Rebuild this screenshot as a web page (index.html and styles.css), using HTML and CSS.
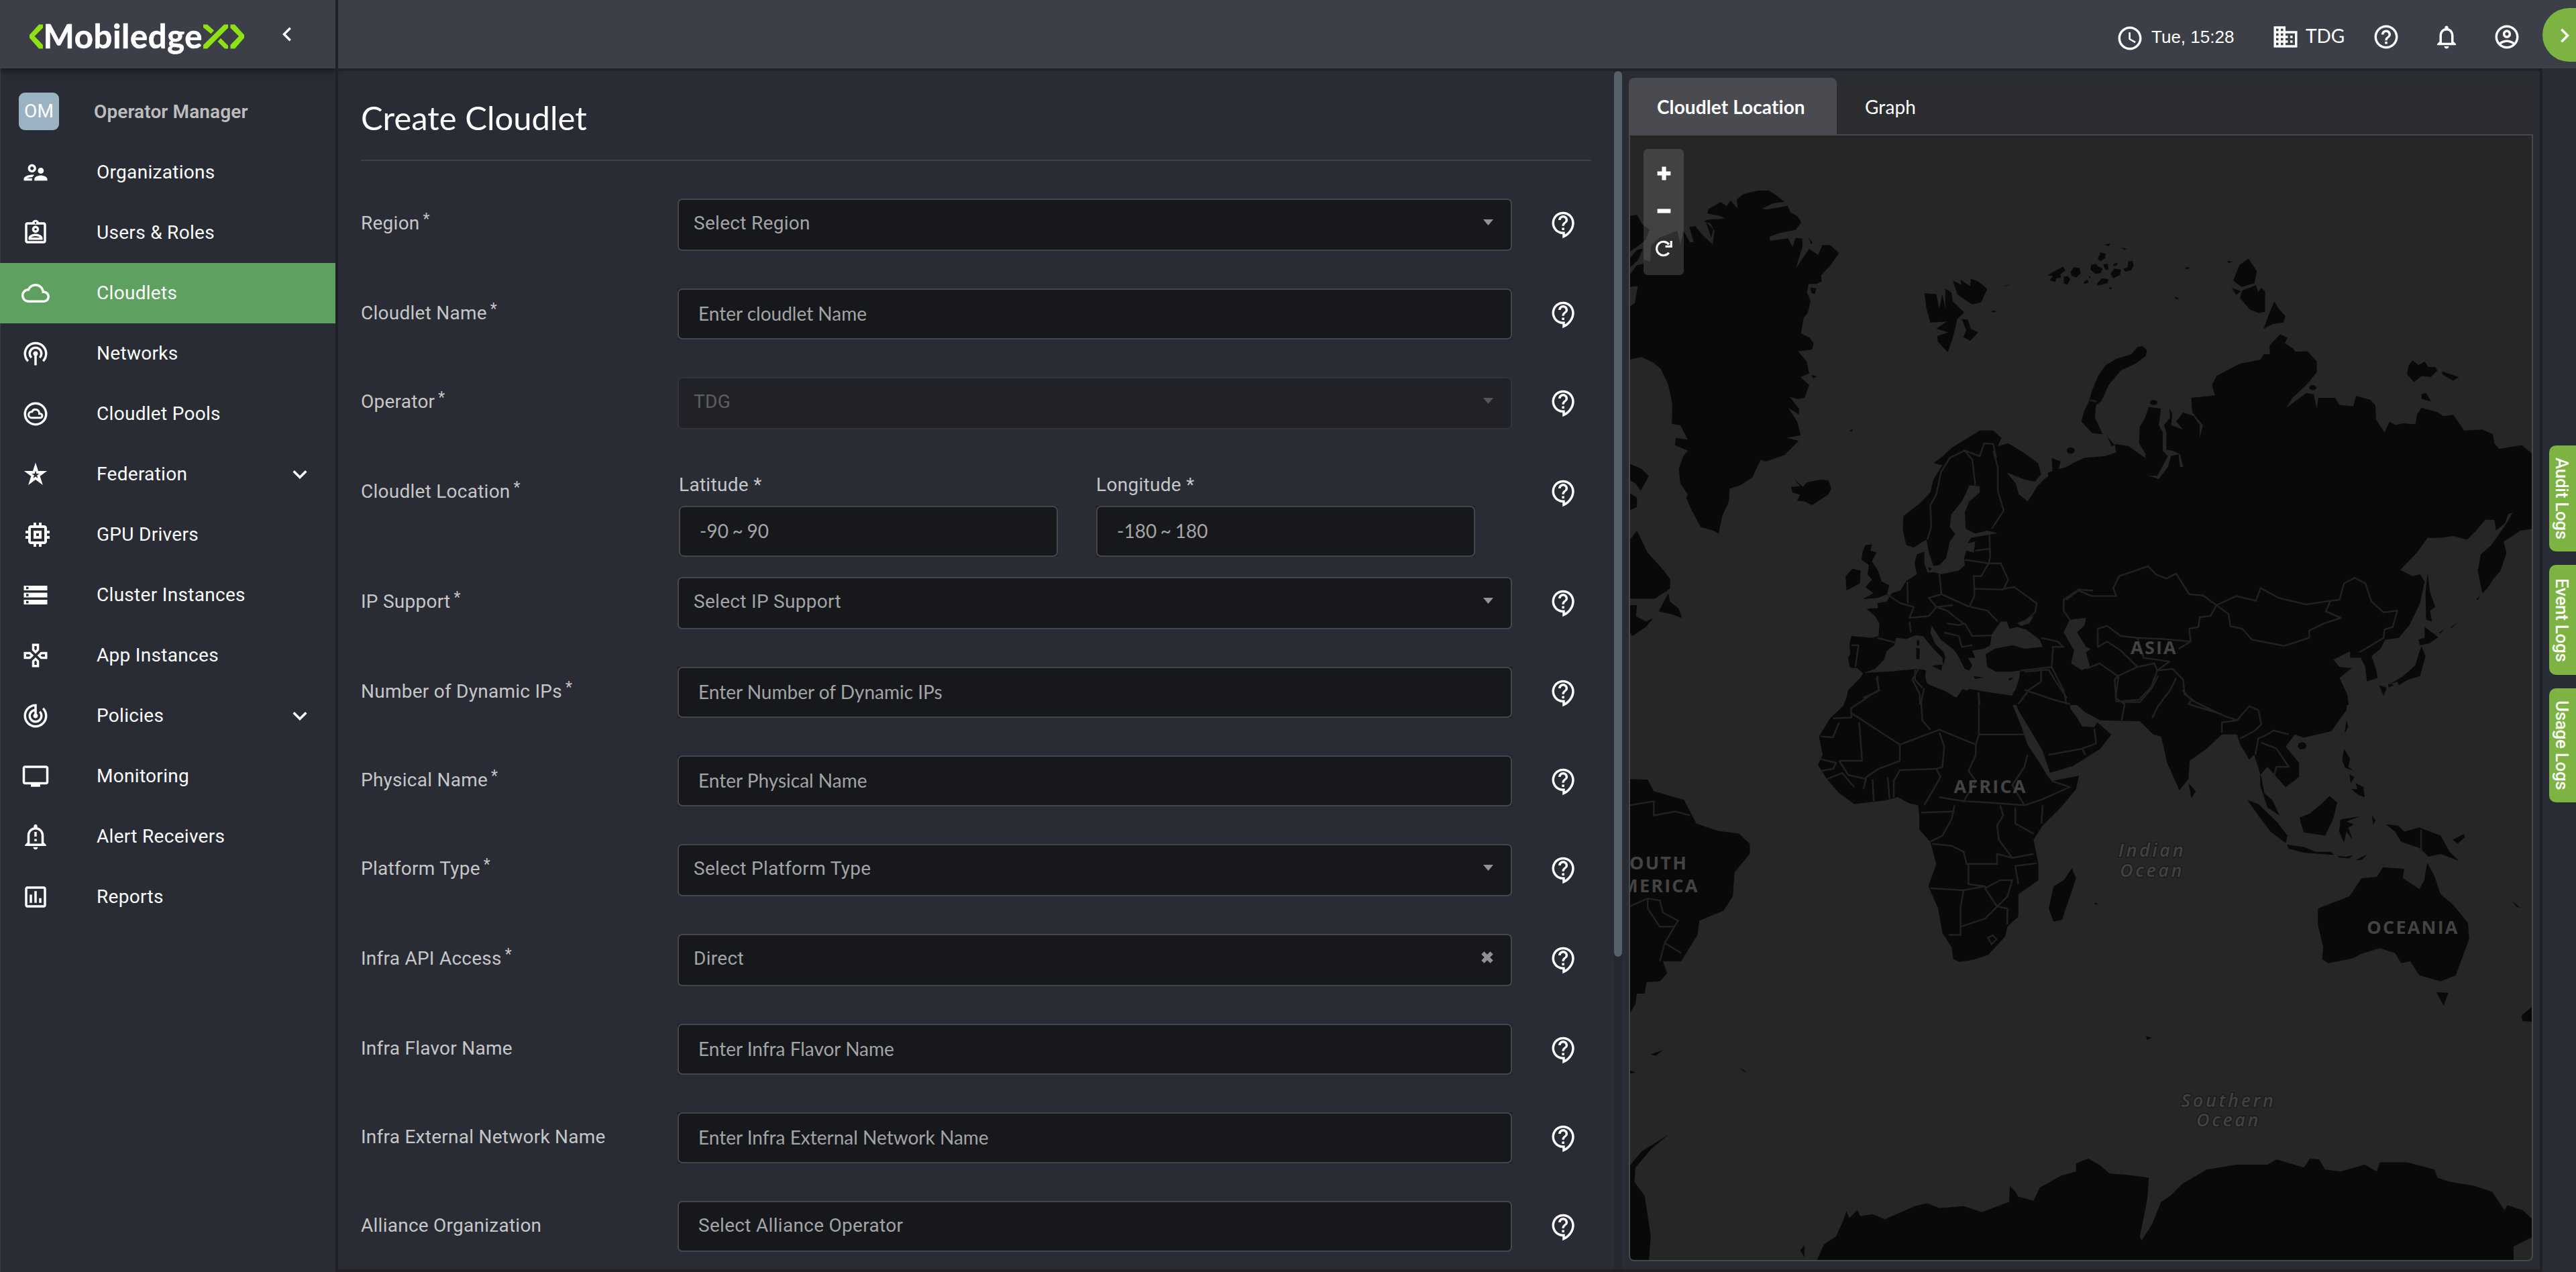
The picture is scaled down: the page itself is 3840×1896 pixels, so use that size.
FILE: index.html
```html
<!DOCTYPE html>
<html lang="en">
<head>
<meta charset="utf-8">
<title>MobiledgeX - Create Cloudlet</title>
<link rel="stylesheet" href="styles.css">
</head>
<body>
<svg class="defs" aria-hidden="true">
  <symbol id="i-help" viewBox="0 0 24 24"><path d="M11 23.59v-3.6c-5.01-.26-9-4.42-9-9.49C2 5.26 6.26 1 11.5 1S21 5.26 21 10.5c0 4.95-3.44 9.93-8.57 12.4l-1.43.69zM11.5 3C7.36 3 4 6.36 4 10.5S7.36 18 11.5 18H13v2.3c3.64-2.3 6-6.08 6-9.8C19 6.36 15.64 3 11.5 3zm-1 11.5h2v2h-2zm2-1.5h-2c0-3.25 3-3 3-5 0-1.1-.9-2-2-2s-2 .9-2 2h-2c0-2.21 1.79-4 4-4s4 1.79 4 4c0 2.5-3 2.75-3 5z"/></symbol>
  <symbol id="i-down" viewBox="0 0 24 24"><path d="M16.59 8.59L12 13.17 7.41 8.59 6 10l6 6 6-6z"/></symbol>
  <symbol id="i-left" viewBox="0 0 24 24"><path d="M15.41 7.41L14 6l-6 6 6 6 1.41-1.41L10.83 12z"/></symbol>
  <symbol id="i-right" viewBox="0 0 24 24"><path d="M8.59 16.59L13.17 12 8.59 7.41 10 6l6 6-6 6z"/></symbol>
  <symbol id="i-caret" viewBox="0 0 15 9"><path d="M0 0h15L7.500 9z"/></symbol>
</svg>

<aside class="sidebar">
  <div class="brand">
    <svg class="logo" viewBox="0 0 320 52" width="320" height="52">
      <g fill="#8fe014">
        <path d="M14 0.500H20V5.500L7.500 18 20 31V36.500H14L0 20.500V16z"/>
        <path d="M259 36.500V31L290 .5H296V5.500L265 36.500z"/>
        <path d="M259 .5H265L275 9.500 270.500 14.500 259 5z"/>
        <path d="M285 21L296 32V36.500H291L280.500 26z"/>
        <path d="M306 .5H299.500V5.500L312 18 299.500 31V36.500H306L320 20.500V16z"/>
      </g>
      <text x="20.500" y="36" textLength="237" class="logo-text">Mobiledge</text>
    </svg>
    <svg class="icon collapse"><use href="#i-left"/></svg>
  </div>
  <div class="role"><span class="avatar">OM</span><span>Operator Manager</span></div>
  <nav>
    <a class="item"><svg class="icon" viewBox="0 0 24 24"><path d="M9 12c1.930 0 3.500-1.570 3.500-3.500S10.930 5 9 5 5.500 6.570 5.500 8.500 7.070 12 9 12zm0-5c.83 0 1.500.67 1.500 1.500S9.830 10 9 10s-1.500-.67-1.500-1.500S8.170 7 9 7zm.05 10H4.770c.99-.5 2.700-1 4.230-1 .11 0 .23.01.34.01.34-.73.93-1.330 1.640-1.810-.73-.13-1.420-.2-1.980-.2-2.340 0-7 1.170-7 3.500V19h7v-1.500c0-.17.02-.34.05-.5zm7.450-2.500c-1.840 0-5.500 1.010-5.500 3V19h11v-1.500c0-1.990-3.660-3-5.500-3zm1.210-1.820c.76-.43 1.290-1.240 1.290-2.180C19 9.120 17.880 8 16.500 8S14 9.120 14 10.500c0 .94.53 1.750 1.290 2.180.36.2.77.32 1.210.32s.85-.12 1.210-.32z"/></svg>Organizations</a>
    <a class="item"><svg class="icon" viewBox="0 0 24 24"><path d="M19 3h-4.180C14.400 1.840 13.300 1 12 1s-2.400.84-2.820 2H5c-1.100 0-2 .9-2 2v14c0 1.100.9 2 2 2h14c1.100 0 2-.9 2-2V5c0-1.100-.9-2-2-2zm-7-.25c.41 0 .75.34.75.75s-.34.75-.75.75-.75-.34-.75-.75.34-.75.75-.75zM19 19H5V5h14v14zM12 6c-1.650 0-3 1.350-3 3s1.350 3 3 3 3-1.350 3-3-1.350-3-3-3zm0 4c-.55 0-1-.45-1-1s.45-1 1-1 1 .45 1 1-.45 1-1 1zm-6 6.470V18h12v-1.530c0-2.500-3.970-3.580-6-3.580s-6 1.070-6 3.580zM8.310 16c.69-.56 2.380-1.120 3.690-1.120s3.010.56 3.690 1.120H8.310z"/></svg>Users &amp; Roles</a>
    <a class="item active"><svg class="icon" viewBox="0 0 24 24"><path d="M19.350 10.040C18.670 6.590 15.640 4 12 4 9.110 4 6.600 5.640 5.350 8.040 2.340 8.360 0 10.910 0 14c0 3.310 2.690 6 6 6h13c2.760 0 5-2.240 5-5 0-2.640-2.050-4.780-4.650-4.960zM19 18H6c-2.210 0-4-1.790-4-4s1.790-4 4-4h.71C7.370 7.690 9.480 6 12 6c3.040 0 5.500 2.460 5.500 5.500v.5H19c1.660 0 3 1.340 3 3s-1.340 3-3 3z"/></svg>Cloudlets</a>
    <a class="item"><svg class="icon" viewBox="0 0 24 24"><g fill="none" stroke="#fff" stroke-width="2"><path d="M5.600 18.400a9 9 0 1 1 12.800 0M8.500 15.500a5 5 0 1 1 7 0M12 12v10"/></g><circle cx="12" cy="12" r="2"/></svg>Networks</a>
    <a class="item"><svg class="icon" viewBox="0 0 24 24"><circle cx="12" cy="12" r="9" fill="none" stroke="#fff" stroke-width="2"/><path transform="translate(5.100 4.800) scale(.575 .6)" fill="none" stroke="#fff" stroke-width="3" d="M19 17.500H6a4.300 4.300 0 0 1 0-8.600h.7A5.700 5.700 0 0 1 17.500 11v.8H19a2.800 2.800 0 0 1 0 5.700z"/></svg>Cloudlet Pools</a>
    <a class="item"><svg class="icon" viewBox="0 0 24 24"><path fill-rule="evenodd" d="M12 2l2.300 7.100H21.800l-6 4.500 2.400 7.600L12 16.600l-6.200 4.600 2.400-7.600-6-4.500h7.500zM12 8.900l-.8 2.500H8.700l2.100 1.500-.8 2.500 2-1.500 2 1.500-.8-2.500 2.100-1.500h-2.500z"/></svg>Federation<svg class="icon more"><use href="#i-down"/></svg></a>
    <a class="item"><svg class="icon chip" viewBox="0 0 24 24"><path d="M15 9H9v6h6V9zm-2 4h-2v-2h2v2zm8-2V9h-2V7c0-1.100-.9-2-2-2h-2V3h-2v2h-2V3H9v2H7c-1.100 0-2 .9-2 2v2H3v2h2v2H3v2h2v2c0 1.100.9 2 2 2h2v2h2v-2h2v2h2v-2h2c1.100 0 2-.9 2-2v-2h2v-2h-2v-2h2zm-4 6H7V7h10v10z"/></svg>GPU Drivers</a>
    <a class="item"><svg class="icon" viewBox="0 0 24 24"><path d="M2 20h20v-4H2v4zm2-3h2v2H4v-2zM2 4v4h20V4H2zm4 3H4V5h2v2zm-4 7h20v-4H2v4zm2-3h2v2H4v-2z"/></svg>Cluster Instances</a>
    <a class="item"><svg class="icon" viewBox="0 0 24 24"><path d="M13 4v2.670l-1 1-1-1V4h2m7 7v2h-2.670l-1-1 1-1H20M6.670 11l1 1-1 1H4v-2h2.670M12 16.330l1 1V20h-2v-2.670l1-1M15 2H9v5.500l3 3 3-3V2zm7 7h-5.500l-3 3 3 3H22V9zM7.500 9H2v6h5.500l3-3-3-3zm4.500 4.500l-3 3V22h6v-5.500l-3-3z"/></svg>App Instances</a>
    <a class="item"><svg class="icon" viewBox="0 0 24 24"><path d="M19.070 4.930l-1.410 1.410C19.100 7.790 20 9.790 20 12c0 4.420-3.580 8-8 8s-8-3.580-8-8c0-4.080 3.050-7.440 7-7.930v2.020C8.160 6.570 6 9.030 6 12c0 3.310 2.690 6 6 6s6-2.690 6-6c0-1.660-.67-3.160-1.760-4.240l-1.410 1.410C15.550 9.900 16 10.900 16 12c0 2.210-1.790 4-4 4s-4-1.790-4-4c0-1.860 1.280-3.410 3-3.860v2.140c-.6.35-1 .98-1 1.720 0 1.100.9 2 2 2s2-.9 2-2c0-.74-.4-1.380-1-1.720V2h-1C6.480 2 2 6.480 2 12s4.480 10 10 10 10-4.480 10-10c0-2.760-1.120-5.260-2.930-7.070z"/></svg>Policies<svg class="icon more"><use href="#i-down"/></svg></a>
    <a class="item"><svg class="icon" viewBox="0 0 24 24"><path d="M21 3H3c-1.100 0-2 .9-2 2v12c0 1.100.9 2 2 2h5v2h8v-2h5c1.100 0 2-.9 2-2V5c0-1.100-.9-2-2-2zm0 14H3V5h18v12z"/></svg>Monitoring</a>
    <a class="item"><svg class="icon" viewBox="0 0 24 24"><path d="M12 23c1.100 0 1.990-.89 1.990-1.990h-3.980c0 1.100.89 1.990 1.990 1.990zm7-6v-6c0-3.350-2.360-6.150-5.500-6.830V3c0-.83-.67-1.500-1.500-1.500s-1.500.67-1.500 1.500v1.170C7.360 4.850 5 7.650 5 11v6l-2 2v1h18v-1l-2-2zm-2 1H7v-7c0-2.760 2.240-5 5-5s5 2.240 5 5v7zM11 8h2v4h-2zm0 6h2v2h-2z"/></svg>Alert Receivers</a>
    <a class="item"><svg class="icon" viewBox="0 0 24 24"><path d="M19 3H5c-1.100 0-2 .9-2 2v14c0 1.100.9 2 2 2h14c1.100 0 2-.9 2-2V5c0-1.100-.9-2-2-2zm0 16H5V5h14v14zM7 10h2v7H7zm4-3h2v10h-2zm4 6h2v4h-2z"/></svg>Reports</a>
  </nav>
</aside>

<div class="page">
  <header class="topbar">
    <div class="clock"><svg class="icon" viewBox="0 0 24 24"><path d="M11.990 2C6.470 2 2 6.480 2 12s4.470 10 9.990 10C17.520 22 22 17.520 22 12S17.520 2 11.990 2zM12 20c-4.420 0-8-3.580-8-8s3.580-8 8-8 8 3.580 8 8-3.580 8-8 8zm.5-13H11v6l5.250 3.150.75-1.230-4.500-2.670z"/></svg><span>Tue, 15:28</span></div>
    <div class="org"><svg class="icon" viewBox="0 0 24 24"><path d="M12 7V3H2v18h20V7H12zM6 19H4v-2h2v2zm0-4H4v-2h2v2zm0-4H4V9h2v2zm0-4H4V5h2v2zm4 12H8v-2h2v2zm0-4H8v-2h2v2zm0-4H8V9h2v2zm0-4H8V5h2v2zm10 12h-8v-2h2v-2h-2v-2h2v-2h-2V9h8v10zm-2-8h-2v2h2v-2zm0 4h-2v2h2v-2z"/></svg><span>TDG</span></div>
    <svg class="icon act" viewBox="0 0 24 24"><path d="M11 18h2v-2h-2v2zm1-16C6.480 2 2 6.480 2 12s4.480 10 10 10 10-4.480 10-10S17.520 2 12 2zm0 18c-4.410 0-8-3.590-8-8s3.590-8 8-8 8 3.590 8 8-3.590 8-8 8zm0-14c-2.210 0-4 1.790-4 4h2c0-1.100.9-2 2-2s2 .9 2 2c0 2-3 1.750-3 5h2c0-2.250 3-2.500 3-5 0-2.210-1.790-4-4-4z"/></svg>
    <svg class="icon act" viewBox="0 0 24 24"><path d="M12 22c1.100 0 2-.9 2-2h-4c0 1.100.9 2 2 2zm6-6v-5c0-3.070-1.630-5.640-4.500-6.320V4c0-.83-.67-1.500-1.500-1.500s-1.500.67-1.500 1.500v.68C7.640 5.360 6 7.920 6 11v5l-2 2v1h16v-1l-2-2zm-2 1H8v-6c0-2.480 1.510-4.500 4-4.500s4 2.020 4 4.500v6z"/></svg>
    <svg class="icon" viewBox="0 0 24 24"><path d="M12 2C6.480 2 2 6.480 2 12s4.480 10 10 10 10-4.480 10-10S17.520 2 12 2zM7.070 18.280c.43-.9 3.050-1.780 4.930-1.780s4.510.88 4.930 1.780C15.570 19.360 13.860 20 12 20s-3.570-.64-4.930-1.720zm11.290-1.450c-1.430-1.740-4.900-2.330-6.360-2.330s-4.930.59-6.360 2.330C4.620 15.490 4 13.820 4 12c0-4.410 3.590-8 8-8s8 3.590 8 8c0 1.820-.62 3.490-1.640 4.830zM12 6c-1.940 0-3.500 1.560-3.500 3.500S10.060 13 12 13s3.500-1.560 3.500-3.500S13.940 6 12 6zm0 5c-.83 0-1.500-.67-1.500-1.500S11.170 8 12 8s1.500.67 1.500 1.500S12.830 11 12 11z"/></svg>
  </header>

  <main class="content">
    <section class="form">
      <h1>Create Cloudlet</h1>
      <div class="row"><label>Region<sup>*</sup></label><div class="field select">Select Region<svg class="caret"><use href="#i-caret"/></svg></div><svg class="icon"><use href="#i-help"/></svg></div>
      <div class="row"><label>Cloudlet Name<sup>*</sup></label><div class="wrap"><div class="field input">Enter cloudlet Name</div></div><svg class="icon"><use href="#i-help"/></svg></div>
      <div class="row"><label>Operator<sup>*</sup></label><div class="field select disabled">TDG<svg class="caret"><use href="#i-caret"/></svg></div><svg class="icon"><use href="#i-help"/></svg></div>
      <div class="row location"><label>Cloudlet Location<sup>*</sup></label>
        <div class="coords">
          <div><span>Latitude *</span><div class="wrap"><div class="field input">-90 ~ 90</div></div></div>
          <div><span>Longitude *</span><div class="wrap"><div class="field input">-180 ~ 180</div></div></div>
        </div><svg class="icon"><use href="#i-help"/></svg></div>
      <div class="row"><label>IP Support<sup>*</sup></label><div class="field select">Select IP Support<svg class="caret"><use href="#i-caret"/></svg></div><svg class="icon"><use href="#i-help"/></svg></div>
      <div class="row"><label>Number of Dynamic IPs<sup>*</sup></label><div class="wrap"><div class="field input">Enter Number of Dynamic IPs</div></div><svg class="icon"><use href="#i-help"/></svg></div>
      <div class="row"><label>Physical Name<sup>*</sup></label><div class="wrap"><div class="field input">Enter Physical Name</div></div><svg class="icon"><use href="#i-help"/></svg></div>
      <div class="row"><label>Platform Type<sup>*</sup></label><div class="field select">Select Platform Type<svg class="caret"><use href="#i-caret"/></svg></div><svg class="icon"><use href="#i-help"/></svg></div>
      <div class="row"><label>Infra API Access<sup>*</sup></label><div class="field select">Direct<svg class="clear" viewBox="0 0 18 18"><path d="M4.500 4.500l9 9M13.500 4.500l-9 9" stroke="#8f9194" stroke-width="6" stroke-linecap="square"/></svg></div><svg class="icon"><use href="#i-help"/></svg></div>
      <div class="row"><label>Infra Flavor Name</label><div class="wrap"><div class="field input">Enter Infra Flavor Name</div></div><svg class="icon"><use href="#i-help"/></svg></div>
      <div class="row"><label>Infra External Network Name</label><div class="wrap"><div class="field input">Enter Infra External Network Name</div></div><svg class="icon"><use href="#i-help"/></svg></div>
      <div class="row"><label>Alliance Organization</label><div class="field input plain">Select Alliance Operator</div><svg class="icon"><use href="#i-help"/></svg></div>
    </section>
    <div class="scroll"><div class="thumb"></div></div>
    <section class="side">
      <div class="tabs"><span class="tab on">Cloudlet Location</span><span class="tab">Graph</span></div>
      <div class="map">
        <svg class="world" viewBox="0 0 1344 1676" width="1344" height="1676">
          <!-- southern lands, Africa and southern Asia -->
          <g class="land" transform="translate(-10 748) scale(.9057 .6033)">
            <path d="M395 88L430 85 495 80 497 100 500 115 530 133 548 150 558 128 585 138 632 145 640 165 655 220 665 265 685 310 697 340 705 355 750 342 745 375 720 420 690 465 675 500 683 560 683 600 650 635 650 690 632 715 628 740 600 785 575 797 553 802 543 795 540 765 525 730 518 670 502 615 515 560 505 505 487 475 487 440 485 415 470 410 452 395 430 403 380 412 355 385 335 350 320 315 328 290 322 245 340 200 365 165 370 130 390 100z"/>
            <path d="M738 570L745 595 735 640 722 698 708 702 700 670 708 615 725 600z"/>
            <path d="M652 100L645 130 640 140 650 180 668 225 690 280 702 335 740 318 785 275 803 240 780 210 775 222 755 220 745 195 735 175 735 152 760 185 785 205 850 207 872 240 885 245 895 310 915 378 930 350 932 305 960 275 985 240 1010 240 1015 265 1030 302 1038 290 1050 345 1055 385 1068 402 1080 440 1060 420 1048 365 1048 340 1060 320 1075 345 1090 370 1112 345 1112 310 1090 270 1105 240 1120 248 1165 232 1190 180 1192 145 1175 100z"/>
            <path d="M930 360L942 380 935 397zM1027 402L1045 412 1075 455 1093 490 1090 508 1065 480 1045 440zM1092 512L1120 518 1140 530 1165 530 1170 538 1120 532 1095 522zM1175 540l14 2 12-4-6 8-16-2zM1205 550l20-14-10 14zM1113 445L1130 435 1150 410 1162 392 1175 408 1168 450 1155 490 1120 482 1115 460zM1180 450L1212 442 1190 455 1202 462 1193 470 1200 500 1190 480 1186 507 1178 480zM1186 275L1196 300 1193 320 1202 330 1188 322 1183 305zM1205 360L1218 370 1220 395 1210 390 1198 375 1208 375zM1195 338l8 8-6 14zM1190 205L1193 220 1187 238zM1255 462L1275 465 1285 480 1310 470 1345 490 1360 530 1375 552 1345 535 1325 542 1310 520 1280 505 1270 480zM1232 440l6 12-4 12zM1365 500l18-14 2 8-12 16zM1462 650l14 18-6-2z"/>
            <ellipse cx="1117" cy="268" rx="7" ry="9"/>
            <path d="M1143 670L1195 640 1215 595 1240 592 1250 568 1285 572 1283 595 1310 622 1318 600 1323 557 1335 590 1345 635 1365 660 1390 705 1392 745 1370 835 1345 850 1310 835 1295 800 1280 805 1270 780 1245 768 1215 782 1200 793 1160 805 1150 795 1152 765 1143 710zM1338 877L1358 878 1350 910zM1496 912L1478 935 1480 948 1496 950z"/>
            <path d="M8 350L40 352 50 380 100 402 113 440 120 460 155 478 190 485 208 510 208 535 183 580 180 640 165 675 125 700 122 735 95 800 65 800 72 830 60 850 38 852 35 880 22 880 20 905 8 935z"/>
            <path d="M8 1310L30 1270 75 1228 45 1265 20 1310 18 1345 35 1380 45 1480 42 1540 8 1540z"/>
            <path d="M318 1540L330 1500 350 1480 362 1440 367 1418 372 1435 385 1415 390 1430 410 1425 430 1438 480 1405 500 1398 520 1410 560 1405 590 1420 635 1395 636 1355 645 1370 650 1382 675 1392 685 1360 720 1330 745 1320 745 1300 765 1288 785 1305 800 1325 830 1328 865 1335 862 1390 850 1480 853 1490 870 1450 885 1395 900 1380 920 1350 960 1315 1010 1303 1060 1303 1075 1290 1120 1310 1130 1288 1145 1290 1155 1315 1180 1320 1220 1303 1240 1320 1245 1297 1290 1297 1335 1315 1340 1335 1360 1345 1400 1355 1430 1370 1450 1415 1455 1403 1480 1415 1498 1440 1498 1480 1465 1505 1465 1540zM291 1515l7-14 0 30zM45 1030l20-10-12 14zM190 1060l14 16-6-4zM860 985l10 5-8 4zM775 655l6 3-4 3zM10 1070l10 5-10 3z"/>
          </g>
          <!-- northern Eurasia and Pacific coast -->
          <g class="land" transform="translate(650 -2) scale(.4528 .5421)">
            <path d="M-60 930L0 915 60 890 130 885 165 875 160 852 205 858 260 890 262 880 240 850 242 805 260 780 272 750 312 755 305 800 318 820 318 870 335 885 300 940 268 938 305 948 335 915 345 885 370 880 375 915 385 915 375 880 350 870 330 868 330 820 322 800 342 780 340 755 350 770 345 800 385 812 362 790 385 765 420 775 440 800 440 835 450 800 415 765 412 725 490 718 480 690 495 665 570 632 640 620 650 605 670 605 670 580 705 550 728 560 720 575 745 588 755 598 795 597 825 625 825 655 790 690 745 725 725 752 790 712 815 715 825 755 830 725 885 725 900 745 945 748 955 720 1000 730 1018 745 1020 785 1048 820 1065 790 1085 800 1110 795 1150 798 1155 770 1170 752 1225 765 1240 775 1275 772 1310 815 1370 812 1405 825 1410 850 1425 865 1500 855 1536 880 1536 1085 1495 1090 1460 1110 1440 1120 1450 1150 1430 1200 1405 1225 1385 1250 1370 1262 1355 1200 1365 1155 1400 1130 1450 1070 1470 1040 1455 1045 1445 1070 1415 1090 1410 1060 1380 1060 1350 1090 1320 1115 1275 1105 1230 1110 1190 1110 1155 1150 1100 1198 1140 1215 1165 1210 1180 1230 1165 1290 1130 1350 1095 1385 1050 1390 1035 1415 1005 1435 1020 1470 1025 1495 990 1505 985 1465 970 1440 935 1440 935 1422 880 1445 900 1465 940 1468 900 1495 925 1540 930 1570 0 1570z"/>
            <path d="M1190 1208L1198 1260 1215 1300 1198 1310 1204 1340 1185 1335 1183 1260zM1180 1355L1225 1383 1195 1400 1165 1405 1160 1390 1180 1385zM1170 1408L1183 1435 1165 1490 1125 1500 1095 1515 1090 1505 1060 1515 1110 1490 1150 1460 1158 1435zM1030 1515L1055 1522 1045 1545zM1060 1512l20 2-18 8zM1225 1372l22-12-14 12zM1262 1358l28-16-22 16zM1350 1280l14-14-8 14z"/>
            <path d="M120 825L85 822 50 790 60 760 75 735 85 705 105 665 130 635 165 618 215 605 235 585 252 583 266 594 262 610 230 630 180 650 140 690 115 735 98 745 95 780zM135 832L160 855 150 858z"/>
            <path d="M600 342L628 377 620 410 578 420 550 403 570 360zM545 422L575 432 560 442zM580 430L625 415 632 435 642 422 655 432 655 488 635 492 605 482 572 450zM685 460L700 480 722 500 715 518 680 522 650 535 670 490z"/>
            <path d="M1140 622L1160 635 1180 625 1192 640 1215 640 1222 650 1200 668 1170 665 1145 682 1122 660 1128 635zM1237 652L1293 668 1275 678 1240 662zM1170 715L1185 712 1202 735 1170 728zM530 348l18 3-14 3zM355 447l18 5-10 2zM392 366l18 0-14 6z"/>
            <ellipse cx="15" cy="870" rx="13" ry="9"/><ellipse cx="288" cy="738" rx="12" ry="7"/><ellipse cx="812" cy="697" rx="12" ry="7"/>
            <path d="M14 378l12-12 18 2 4 14-14 12-16-4zM82 360l14-4 10 8 14 6-6 12-18 2-16-12zM104 345l8-20 18 4-2 12-14 8zM122 358l14-2 4 16-12 0zM146 384l12-14 22 2-2 14-22 10zM156 356l14-2-4 8-10 0zM188 370l14-4 2-16 14-2 4 12-8 14-20 4zM102 410l16-14 22 4-4 10-32 6zM-8 392l12-2 10 8-10 16-12-4zM-62 388l34-16 18-8 8 10-18 12 4 8-16 2-4 10-18-4 10-12zM58 406l12-6 4 8-14 4zM180 312l18 2-4 4zM128 304l18-4-6 8zM140 424l8-4 2 6-8 0zM74 390l8 2-6 4z"/>
          </g>
          <!-- Greenland, Iceland and Europe -->
          <g class="land" transform="translate(-10 -2) scale(.4464 .5421)">
            <path d="M18 225L45 222 65 250 88 262 75 290 45 310 18 325zM18 345L45 318 65 315 50 345 18 370zM18 390L45 360 65 357 70 345 90 350 92 305 120 285 180 265 190 305 200 265 222 297 235 297 220 255 240 253 265 278 298 303 304 265 290 245 268 240 280 235 340 232 320 224 280 218 285 205 325 187 345 198 358 182 382 205 378 180 400 165 450 155 485 155 510 168 538 186 500 190 462 205 480 207 548 197 558 215 580 225 594 242 575 263 520 272 488 282 490 293 550 287 565 310 575 285 597 287 598 310 575 370 620 315 650 332 665 305 690 305 720 327 690 362 660 388 662 405 645 412 618 412 613 435 625 460 615 492 602 505 593 548 622 560 635 575 630 592 583 597 612 625 620 658 592 668 620 690 605 725 580 728 555 722 587 755 585 770 550 752 580 790 592 828 545 835 585 843 538 882 475 900 458 895 430 945 390 965 355 975 352 1010 330 1050 318 1098 300 1090 258 1080 225 1030 210 1000 215 990 190 960 185 920 200 885 215 870 172 855 175 835 215 840 190 800 162 797 163 740 150 690 125 645 100 628 60 613 18 620z"/>
            <path class="sea" d="M18 420L48 418 38 465 18 475zM275 240L300 262 295 295 270 260z"/>
            <path d="M275 240L300 262 293 285z"/>
            <path d="M560 970L590 968 570 948 600 970 612 958 625 955 660 950 685 952 694 975 685 990 630 1020 605 1010 580 1008 590 992 565 985zM18 905L60 920 85 940 58 980 40 960 18 950zM18 985L45 1000 45 1025 18 1035zM18 1120L45 1090 80 1150 135 1200 157 1225 155 1250 105 1277 18 1277zM118 1312L150 1262 155 1285 185 1305 195 1330 160 1320zM18 1295L45 1295 42 1325 75 1340 100 1330 75 1355 30 1380 18 1365z"/>
            <path d="M1005 437L1045 440 1055 480 1065 440 1075 480 1075 425 1095 435 1100 460 1138 490 1115 508 1100 560 1083 600 1050 570 1048 555 1085 545 1045 535 1080 515 1025 518 1012 480zM1100 402L1130 415 1125 400 1158 418 1160 398 1185 405 1215 425 1195 462 1165 468 1140 455 1115 440zM1130 508L1150 510 1160 535 1185 545 1158 568 1135 558 1145 540zM1270 418l26-8-20 8zM1225 488l14-4 6 6zM755 816l12-6-4 8zM625 422l20 2-6 16-12-4zM628 662l18 4-12 6zM618 283l14 16-6 4z"/>
            <path d="M1568 895L1540 890 1500 905 1470 938 1435 950 1430 890 1460 900 1450 930 1410 945 1380 970 1370 985 1350 1010 1320 990 1310 960 1280 930 1340 950 1375 955 1395 935 1385 905 1330 872 1285 850 1250 858 1262 835 1235 815 1190 815 1150 835 1100 860 1060 890 1035 905 1065 910 1035 950 1025 985 990 1015 935 1050 933 1090 945 1130 970 1137 1000 1120 1012 1115 1020 1150 1035 1187 1055 1185 1078 1165 1090 1120 1108 1100 1090 1080 1095 1045 1130 1010 1145 985 1155 965 1190 968 1190 985 1155 1010 1140 1040 1143 1085 1175 1098 1215 1090 1250 1097 1160 1110 1150 1125 1175 1120 1170 1150 1145 1145 1138 1165 1140 1185 1120 1200 1060 1210 1040 1205 1015 1205 1005 1180 1005 1148 980 1155 972 1180 980 1210 945 1228 925 1255 895 1262 880 1285 848 1290 850 1303 812 1305 840 1325 855 1345 852 1380 830 1385 762 1380 755 1400 757 1430 750 1440 757 1467 780 1468 800 1482 840 1470 870 1445 880 1420 905 1405 910 1385 945 1388 975 1378 1000 1380 1035 1415 1065 1440 1068 1460 1075 1440 1070 1425 1040 1400 1025 1370 1030 1352 1060 1390 1100 1415 1115 1430 1140 1470 1155 1475 1165 1460 1150 1440 1175 1440 1165 1420 1205 1415 1225 1405 1230 1375 1260 1340 1280 1340 1290 1360 1315 1355 1345 1362 1390 1390 1400 1410 1340 1415 1300 1405 1240 1415 1210 1430 1215 1465 1245 1478 1290 1478 1325 1475 1320 1510 1310 1545 1265 1540 1220 1535 1155 1525 1120 1550 1095 1545 1040 1525 1005 1505 1010 1475 985 1470 920 1475 870 1485 835 1492 800 1485 780 1510 750 1540 735 1570 1570 1570z"/>
            <path d="M808 1130L830 1128 825 1145 845 1150 830 1175 850 1200 862 1230 888 1240 880 1265 850 1275 800 1278 835 1262 808 1245 830 1225 815 1210 820 1185 795 1170 800 1145zM742 1215L765 1195 792 1200 790 1235 745 1255zM1030 1462L1065 1458 1062 1475zM978 1412L990 1415 988 1445 978 1442zM980 1392l8 0 0 14-8 0zM1170 1490l34 4-30 4zM1285 1497l18-4-12 10zM1018 1190l12 4-8 8z"/>
            <path class="sea" d="M1315 1345L1370 1325 1355 1345 1330 1352zM1490 1335L1545 1330 1540 1350 1515 1370 1545 1410 1560 1415 1545 1425 1558 1465 1530 1474 1495 1455 1505 1420 1470 1370z"/>
          </g>
          <g class="borders" transform="translate(-10 748) scale(.9057 .6033)">
            <path d="M418 95L420 130 375 175 375 198 345 200M373 185L455 265 520 228 580 265M325 245L345 247 355 210M388 210L393 305 355 305M495 125L490 160 492 205 505 228M480 80L480 105 492 125M585 138V240H660M585 240L580 265 580 290 568 330 580 355 560 405M455 265L455 305 420 325 400 345 395 375M520 235L528 270 525 320 515 325 455 328 445 355 445 395M515 325L522 345 495 415M520 395L560 405 600 408 660 415 690 400 735 370 705 355M665 290L660 320 640 365 660 415M545 415L540 450 525 490 505 505M490 433L545 430M620 415L625 440 615 465 618 500 640 545 675 535M645 420L645 460 675 485M690 415L688 460M508 510L540 515 560 530 565 560 615 560 615 535 640 545M568 560L568 610 595 615 560 625 505 620M560 625L555 665 555 735 535 735M555 715L595 695 632 640 640 600 620 600 595 620 615 665 632 670 632 710M680 558L645 565 650 610M600 742l8-6 6 10-8 12zM322 300L350 310 345 325 325 330M335 350L360 335 380 370M410 350L412 405M435 345L438 400M355 305L370 340 400 350"/>
            <path d="M660 85L700 80 712 110 730 150M660 130L710 155 735 165M700 290L755 275 778 262 775 225M755 275L760 290M650 165L665 135M815 95L810 150 825 165 820 205M820 160L850 160 870 125 880 95M870 200L880 170 900 130 910 100M920 130L935 155 990 195 1010 205 985 210 985 235M935 155L930 165 985 190M1010 205L1030 170 1045 180 1050 215 1040 230 1015 250M1040 290L1045 250 1060 240 1070 230 1095 240M1050 260L1075 275 1095 320 1075 320 1070 345M10 415L50 405 50 440 85 430 110 440M10 665L40 645 60 650 65 680 90 700 68 755 95 780M40 645L40 670 60 715 85 715M68 755L60 800M1313 475V530"/>
          </g>
          <g class="borders" transform="translate(650 -2) scale(.4528 .5421)">
            <path d="M0 1280L40 1255 85 1270 165 1270 155 1248 175 1215 270 1188 295 1210 330 1222 362 1208 405 1265 450 1268 495 1295 475 1325 440 1328 435 1355 405 1360 410 1395 370 1415M410 1395L320 1388 235 1385 180 1380 135 1352 104 1360V1410L135 1395 180 1420 235 1465 290 1455 300 1475 280 1520 240 1555 165 1560 160 1500 170 1490 235 1465M235 1385L255 1440 340 1450 300 1475M495 1295L560 1270 625 1283 640 1248 700 1275 790 1293 870 1283 855 1312 905 1330 850 1345 800 1365 800 1385 718 1407 612 1390 580 1360 540 1352 535 1320zM870 1283L900 1280 915 1235 950 1220 985 1235 1005 1285 1045 1315 1090 1310 1075 1355 1048 1362 1045 1385 965 1425M65 1470L110 1455 170 1490M300 1475L350 1470 385 1500 390 1540 420 1558M100 735l-22-4"/>
          </g>
          <g class="borders" transform="translate(-10 -2) scale(.4464 .5421)">
            <path d="M1015 1115L1028 1080 1025 1020 1045 990 1060 930 1090 890 1140 870 1165 895 1175 965M1140 870L1190 885 1205 850 1235 852 1245 890M1235 870L1250 915 1250 980 1270 1035 1230 1085M1222 1100L1225 1160 1220 1180 1260 1180 1285 1225 1270 1250 1305 1245 1380 1290 1375 1315 1340 1340M1175 1145L1222 1140M1140 1170L1220 1180 1195 1215 1170 1215 1172 1250 1270 1252M1172 1250L1172 1270 1155 1300M1055 1210L1062 1265 1130 1290 1155 1300M1062 1265L1020 1275 1045 1300 1100 1295M970 1300L955 1330 1020 1325 1045 1300 1080 1310 1135 1345M1160 1300L1215 1310 1250 1340M880 1265L925 1290 970 1300M948 1230L950 1290M955 1340L960 1370M848 1385L908 1398M762 1405L785 1405 775 1465M1140 1345L1165 1380 1230 1378M1080 1345L1120 1350 1140 1345M1070 1370L1120 1380 1130 1410 1165 1405M1395 1385L1450 1395 1470 1410 1430 1410M1325 1475L1430 1465 1470 1530 1480 1568M1430 1465L1435 1410M1395 1470L1395 1505 1350 1530M1185 1535L1190 1568M985 1470L965 1500 990 1540V1568M845 1495L855 1530 800 1550M1568 1255L1520 1252 1470 1280 1470 1310 1490 1335"/>
          </g>
          <g class="names">
            <text x="781" y="773">ASIA</text>
            <text x="537" y="980">AFRICA</text>
            <text x="1167" y="1190">OCEANIA</text>
            <text x="34" y="1094">SOUTH</text>
            <text x="34" y="1128">AMERICA</text>
            <text class="ocean" x="778" y="1075">Indian</text>
            <text class="ocean" x="778" y="1105">Ocean</text>
            <text class="ocean" x="892" y="1448">Southern</text>
            <text class="ocean" x="892" y="1477">Ocean</text>
          </g>
        </svg>
        <div class="zoom">
          <svg viewBox="0 0 24 24"><path d="M12 2.500v19M2.500 12h19" stroke-width="6"/></svg>
          <svg viewBox="0 0 24 24"><path d="M2.500 12h19" stroke-width="6"/></svg>
          <svg viewBox="0 0 24 24"><path d="M19 18A9.800 9.800 0 1 1 19 6" stroke-width="3"/><path d="M14 9h8.300V1" stroke-width="3"/></svg>
        </div>
      </div>
    </section>
  </main>
</div>

<div class="drawer"><svg class="icon"><use href="#i-right"/></svg></div>
<div class="logs"><span>Audit Logs</span><span>Event Logs</span><span>Usage Logs</span></div>
</body>
</html>
```

FILE: styles.css
```css
* { box-sizing: border-box; }
body { margin: 0; width: 3840px; height: 1896px; display: flex; overflow: hidden; position: relative; background: #292c34; color: #fff; font: 28px/1.2 Roboto, sans-serif; letter-spacing: .3px; }
.defs { position: absolute; width: 0; height: 0; }
.icon { width: 42px; height: 42px; fill: #fff; flex: none; display: block; }

.sidebar { width: 500px; height: 1896px; box-shadow: inset 1px 0 #3c3f47; }
.brand { height: 102px; background: #3c3f48; display: flex; padding: 36px 0 0 44px; box-shadow: 0 3px 10px rgba(0,0,0,.55); }
.logo { flex: none; overflow: visible; }
.logo-text { font: 700 49px Lato, sans-serif; fill: #fff; stroke: #fff; stroke-width: .6px; letter-spacing: 0; }
.collapse { margin: -6px 0 0 43px; }
.role { height: 90px; margin-top: 20px; padding-left: 28px; display: flex; align-items: center; color: #bdbdbd; font-weight: 600; letter-spacing: .1px; }
.avatar { width: 60px; height: 56px; margin: -3px 52px 0 0; border-radius: 9px; background: #9bb2c3; color: #fff; font-weight: 400; line-height: 56px; text-align: center; }
.role span:last-child { padding-bottom: 1px; }
.item { height: 90px; display: flex; align-items: center; padding-left: 32px; }
.item .icon:first-child { margin-right: 70px; }
.item .chip { width: 48px; height: 48px; }
.item .icon.chip:first-child { margin-right: 64px; }
.item .more { margin-left: auto; margin-right: 32px; }
.active { background: #5ea05f; }

.page { width: 3340px; height: 1896px; border-left: 4px solid #202124; display: flex; flex-direction: column; }
.topbar { height: 102px; background: #3c3f48; display: flex; justify-content: flex-end; align-items: center; padding: 8px 82px 0 0; flex: none; }
.clock { width: 232px; display: flex; align-items: center; padding-top: 4px; font: 26px/42px "Liberation Sans", sans-serif; letter-spacing: 0; }
.clock span { margin: -4px 0 0 11px; }
.org { width: 150px; display: flex; align-items: center; font-family: Lato, sans-serif; letter-spacing: 0; }
.org span { margin: -3px 0 0 9px; }
.act { margin-right: 48px; }

.content { flex: 1; width: 3286px; display: flex; border: solid #202124; border-width: 4px 4px 4px 0; }
.form { width: 1902px; height: 1786px; padding: 0 34px; overflow: hidden; }
h1 { margin: 0 0 56px; height: 134px; padding-top: 7px; border-bottom: 2px solid #3e4148; font: 400 49px/125px Lato, sans-serif; letter-spacing: 0; }
.row { display: flex; margin-bottom: 56px; }
label { width: 472px; line-height: 73px; color: #c6c6c7; flex: none; white-space: nowrap; letter-spacing: .25px; }
sup { font-size: 23px; line-height: 0; vertical-align: 8px; margin-left: 5px; }
.row > .icon { margin: 18px 0 0 56px; }
.wrap { width: 1244px; background: #202126; }
.field { width: 1244px; height: 78px; border: 2px solid #45474a; border-radius: 7px; background: #17181c; color: #a3a4a5; line-height: 70px; }
.select { display: flex; justify-content: space-between; padding: 0 26px 0 22px; }
.disabled { background: #212227; border-color: #323439; color: #5d5e62; }
.caret { width: 15px; height: 9px; margin-top: 29px; fill: #929395; }
.disabled .caret { fill: #55565b; }
.clear { width: 18px; height: 18px; margin-top: 24px; overflow: visible; }
.input { width: 100%; height: 76px; padding-left: 29px; line-height: 70px; font-family: Lato, sans-serif; letter-spacing: 0; }
.plain { width: 1244px; font-family: Roboto, sans-serif; letter-spacing: .3px; line-height: 70px; }
.location { height: 134px; margin-bottom: 30px; }
.coords { width: 1244px; display: flex; gap: 57px; padding-left: 2px; color: #c6c6c7; }
.coords > div { width: 565px; }
.coords span { display: block; height: 58px; line-height: 54px; }
.coords .wrap { width: 100%; }
.coords .input { word-spacing: -1.500px; }

.scroll { width: 12px; background: #252830; }
.thumb { height: 1320px; border-radius: 6px; background: #55616a; }
.side { width: 1348px; margin-left: 10px; padding-top: 10px; }
.tabs { height: 84px; display: flex; background: #2b2c30; font: 28px/86px Lato, sans-serif; letter-spacing: .1px; }
.tab { padding: 0 42px; }
.tab.on { width: 310px; background: #4a4b50; border-radius: 8px 8px 0 0; font-weight: 700; white-space: nowrap; }
.map { width: 1348px; height: 1680px; border: 2px solid #45484d; border-radius: 0 0 8px 8px; background: #262626; position: relative; overflow: hidden; }
.world { display: block; }
.land { fill: #090909; }
.sea { fill: #262626; }
.borders path { fill: none; stroke: #212121; stroke-width: 2.500px; vector-effect: non-scaling-stroke; stroke-linejoin: round; }
.names { font: 700 27px "Open Sans", sans-serif; fill: #434343; text-anchor: middle; letter-spacing: 2.200px; }
.ocean { font: italic 600 27px "Open Sans", sans-serif; fill: #414141; letter-spacing: 3.600px; stroke: #1b1b1b; stroke-width: 3px; paint-order: stroke; }
.zoom { position: absolute; left: 20px; top: 20px; width: 60px; height: 188px; border-radius: 6px; background: rgba(120,120,120,.34); display: flex; flex-direction: column; align-items: center; padding-top: 24px; gap: 31px; }
.zoom svg { width: 25px; height: 25px; fill: none; stroke: #fff; }

.drawer { position: absolute; right: 0; top: 12px; width: 50px; height: 80px; border-radius: 40px 0 0 40px; background: #7cb342; padding: 20px 0 0 12px; }
.logs { position: absolute; right: 0; top: 664px; display: flex; flex-direction: column; gap: 20px; }
.logs span { width: 40px; height: 158px; border-radius: 10px 0 0 10px; background: #7cb342; writing-mode: vertical-rl; text-align: center; font: 500 26px/42px Roboto, sans-serif; letter-spacing: -.3px; }
.logs span:nth-child(2) { height: 164px; }
.logs span:nth-child(3) { height: 170px; }
```
